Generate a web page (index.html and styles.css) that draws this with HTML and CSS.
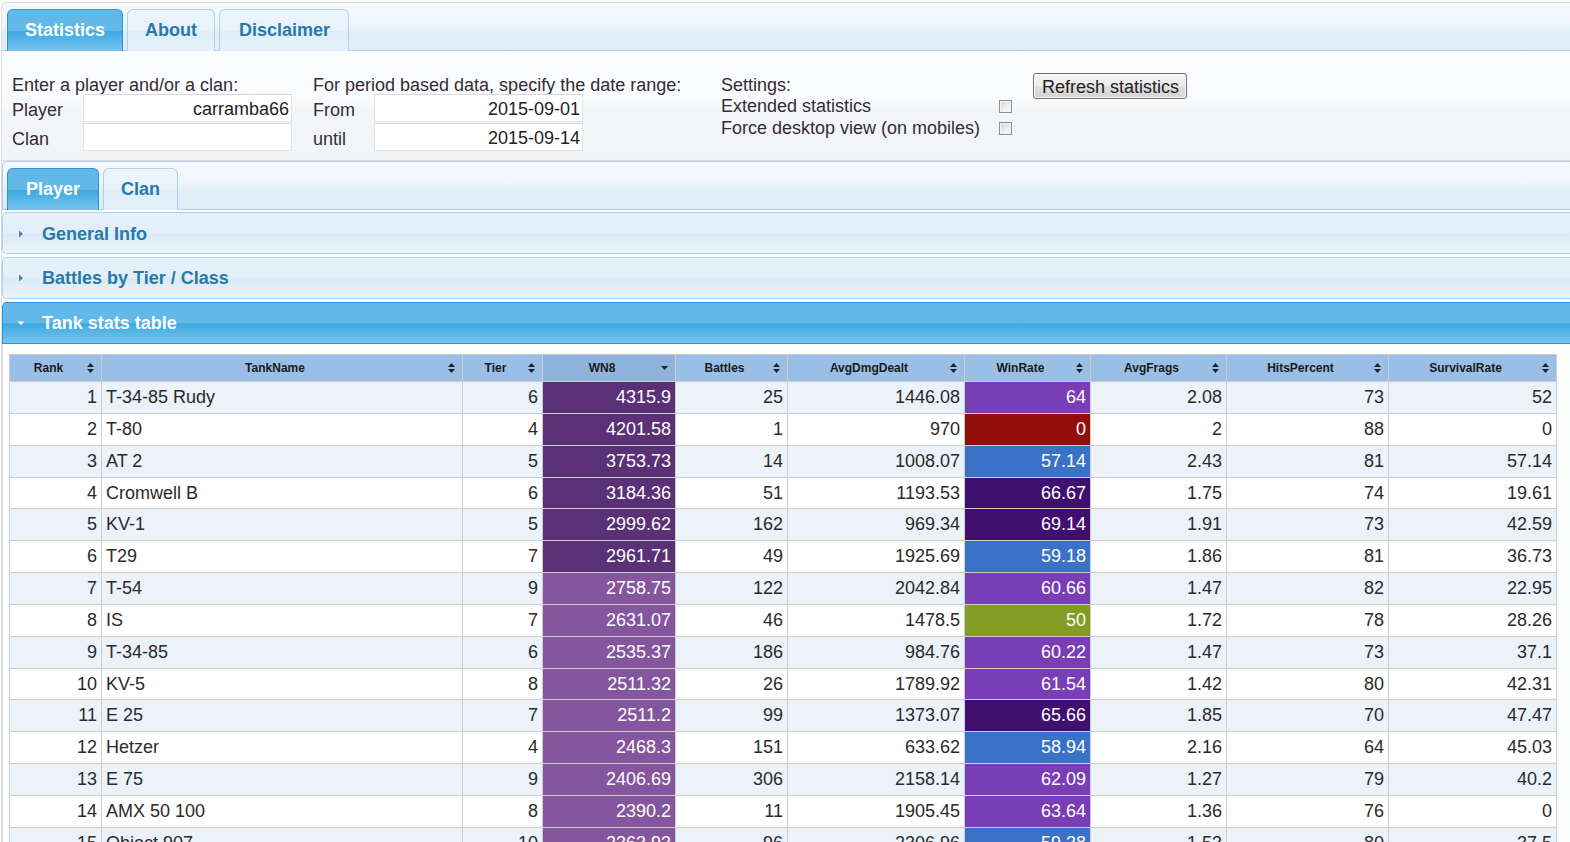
FILE: index.html
```html
<!DOCTYPE html>
<html>
<head>
<meta charset="utf-8">
<title>Tank statistics</title>
<link rel="stylesheet" href="styles.css">
</head>
<body>
<div class="app">
  <ul class="tab-bar main-bar">
    <li class="tab active">Statistics</li>
    <li class="tab">About</li>
    <li class="tab tab-wide">Disclaimer</li>
  </ul>
  <div class="form-panel">
    <div class="form-block block-player">
      <div class="block-title">Enter a player and/or a clan:</div>
      <div class="field-grid">
        <label class="field-label">Player</label><input class="text-input" type="text" value="carramba66">
        <label class="field-label">Clan</label><input class="text-input" type="text" value="">
      </div>
    </div>
    <div class="form-block block-dates">
      <div class="block-title">For period based data, specify the date range:</div>
      <div class="field-grid">
        <label class="field-label">From</label><input class="text-input" type="text" value="2015-09-01">
        <label class="field-label">until</label><input class="text-input" type="text" value="2015-09-14">
      </div>
    </div>
    <div class="form-block block-settings">
      <div class="settings-title">Settings:</div>
      <div class="settings-grid">
        <span>Extended statistics</span><input class="check" type="checkbox">
        <span>Force desktop view (on mobiles)</span><input class="check" type="checkbox">
      </div>
    </div>
    <button class="refresh" type="button">Refresh statistics</button>
  </div>

  <ul class="tab-bar sub-bar">
    <li class="tab active">Player</li>
    <li class="tab">Clan</li>
  </ul>

  <div class="accordion">
    <div class="acc-header">
      <svg class="acc-icon" width="8" height="8" viewBox="0 0 8 8"><path d="M2 0.5L6 4L2 7.5Z" fill="#4583b8"/></svg>
      <span>General Info</span>
    </div>
    <div class="acc-header">
      <svg class="acc-icon" width="8" height="8" viewBox="0 0 8 8"><path d="M2 0.5L6 4L2 7.5Z" fill="#4583b8"/></svg>
      <span>Battles by Tier / Class</span>
    </div>
    <div class="acc-header acc-active">
      <svg class="acc-icon" width="8" height="8" viewBox="0 0 8 8"><path d="M0.5 2.5H7.5L4 6Z" fill="#ffffff"/></svg>
      <span>Tank stats table</span>
    </div>
    <div class="acc-content">
      <table class="stats">
        <colgroup>
          <col class="c-rank"><col class="c-name"><col class="c-tier"><col class="c-wn8"><col class="c-battles">
          <col class="c-dmg"><col class="c-win"><col class="c-frags"><col class="c-hits"><col class="c-surv">
        </colgroup>
        <thead>
          <tr>
            <th>Rank</th><th>TankName</th><th>Tier</th><th class="sorted">WN8</th><th>Battles</th>
            <th>AvgDmgDealt</th><th>WinRate</th><th>AvgFrags</th><th>HitsPercent</th><th>SurvivalRate</th>
          </tr>
        </thead>
        <tbody>
          <tr class="odd"><td>1</td><td class="name">T-34-85 Rudy</td><td>6</td><td class="wn-super">4315.9</td><td>25</td><td>1446.08</td><td class="wr-unicum">64</td><td>2.08</td><td>73</td><td>52</td></tr>
          <tr><td>2</td><td class="name">T-80</td><td>4</td><td class="wn-super">4201.58</td><td>1</td><td>970</td><td class="wr-verybad">0</td><td>2</td><td>88</td><td>0</td></tr>
          <tr class="odd"><td>3</td><td class="name">AT 2</td><td>5</td><td class="wn-super">3753.73</td><td>14</td><td>1008.07</td><td class="wr-great">57.14</td><td>2.43</td><td>81</td><td>57.14</td></tr>
          <tr><td>4</td><td class="name">Cromwell B</td><td>6</td><td class="wn-super">3184.36</td><td>51</td><td>1193.53</td><td class="wr-super">66.67</td><td>1.75</td><td>74</td><td>19.61</td></tr>
          <tr class="odd"><td>5</td><td class="name">KV-1</td><td>5</td><td class="wn-super">2999.62</td><td>162</td><td>969.34</td><td class="wr-super">69.14</td><td>1.91</td><td>73</td><td>42.59</td></tr>
          <tr><td>6</td><td class="name">T29</td><td>7</td><td class="wn-super">2961.71</td><td>49</td><td>1925.69</td><td class="wr-great">59.18</td><td>1.86</td><td>81</td><td>36.73</td></tr>
          <tr class="odd"><td>7</td><td class="name">T-54</td><td>9</td><td class="wn-unicum">2758.75</td><td>122</td><td>2042.84</td><td class="wr-unicum">60.66</td><td>1.47</td><td>82</td><td>22.95</td></tr>
          <tr><td>8</td><td class="name">IS</td><td>7</td><td class="wn-unicum">2631.07</td><td>46</td><td>1478.5</td><td class="wr-good">50</td><td>1.72</td><td>78</td><td>28.26</td></tr>
          <tr class="odd"><td>9</td><td class="name">T-34-85</td><td>6</td><td class="wn-unicum">2535.37</td><td>186</td><td>984.76</td><td class="wr-unicum">60.22</td><td>1.47</td><td>73</td><td>37.1</td></tr>
          <tr><td>10</td><td class="name">KV-5</td><td>8</td><td class="wn-unicum">2511.32</td><td>26</td><td>1789.92</td><td class="wr-unicum">61.54</td><td>1.42</td><td>80</td><td>42.31</td></tr>
          <tr class="odd"><td>11</td><td class="name">E 25</td><td>7</td><td class="wn-unicum">2511.2</td><td>99</td><td>1373.07</td><td class="wr-super">65.66</td><td>1.85</td><td>70</td><td>47.47</td></tr>
          <tr><td>12</td><td class="name">Hetzer</td><td>4</td><td class="wn-unicum">2468.3</td><td>151</td><td>633.62</td><td class="wr-great">58.94</td><td>2.16</td><td>64</td><td>45.03</td></tr>
          <tr class="odd"><td>13</td><td class="name">E 75</td><td>9</td><td class="wn-unicum">2406.69</td><td>306</td><td>2158.14</td><td class="wr-unicum">62.09</td><td>1.27</td><td>79</td><td>40.2</td></tr>
          <tr><td>14</td><td class="name">AMX 50 100</td><td>8</td><td class="wn-unicum">2390.2</td><td>11</td><td>1905.45</td><td class="wr-unicum">63.64</td><td>1.36</td><td>76</td><td>0</td></tr>
          <tr class="odd"><td>15</td><td class="name">Object 907</td><td>10</td><td class="wn-unicum">2363.93</td><td>96</td><td>2306.96</td><td class="wr-great">59.38</td><td>1.53</td><td>80</td><td>37.5</td></tr>
        </tbody>
      </table>
    </div>
  </div>
</div>
</body>
</html>
```
FILE: styles.css
```css
html {
  overflow: hidden;
}
body {
  margin: 0;
  background: #ffffff;
  font-family: "Liberation Sans", Arial, sans-serif;
  font-size: 18px;
  color: #362b36;
}

.app {
  margin: 2px -20px 0 1px;
  border: 1px solid #dddddd;
  border-bottom: 0;
  border-radius: 5px 5px 0 0;
  background: #fcfdfd;
}

/* ---------- tab bars ---------- */
.tab-bar {
  list-style: none;
  margin: 0;
  display: flex;
  gap: 4px;
  background: linear-gradient(to bottom, #f5f9fd 0%, #eff6fc 42%, #e2eff8 62%, #deedf7 100%);
  border-bottom: 1px solid #aed0ea;
}
.main-bar {
  padding: 6px 4px 0 5px;
  border-radius: 4px 4px 0 0;
}
.sub-bar {
  padding: 6px 4px 0 4px;
  border: 1px solid #aed0ea;
  border-radius: 5px 0 0 0;
  border-right: 0;
}
.tab {
  height: 41px;
  line-height: 41px;
  padding: 0 17px;
  margin-bottom: -1px;
  border: 1px solid #aed0ea;
  border-bottom: 0;
  border-radius: 6px 6px 0 0;
  font-weight: bold;
  color: #2779aa;
  background: linear-gradient(to bottom, #edf5fc 0%, #e8f2fb 50%, #dfeef9 52%, #e4f0fa 100%);
}
.tab.active {
  color: #ffffff;
  border-color: #2694e8;
  background: linear-gradient(to bottom, #62b9e8 0%, #62b9e8 50%, #3ca9e3 52%, #78c4eb 100%);
}
.tab.tab-wide {
  padding: 0 18px 0 19px;
}
.sub-bar .tab:first-child {
  padding: 0 18px;
}

/* ---------- form ---------- */
.form-panel {
  display: flex;
  align-items: flex-start;
  gap: 21px;
  padding: 22px 10px 9px 10px;
  border-bottom: 1px solid #dddddd;
  background: linear-gradient(to bottom, #fcfdfe 0%, #fafbfc 40%, #f3f6f8 56%, #f2f5f7 100%);
}
.block-player {
  width: 280px;
}
.block-dates {
  width: 387px;
}
.block-settings {
  width: 291px;
}
.block-title {
  height: 21px;
  line-height: 25px;
  white-space: nowrap;
}
.field-grid {
  display: grid;
  grid-template-columns: 71px 209px;
  grid-auto-rows: 28px;
  row-gap: 1px;
}
.block-dates .field-grid {
  grid-template-columns: 61px 209px;
}
.field-label {
  height: 28px;
  line-height: 32px;
}
.text-input {
  box-sizing: border-box;
  width: 209px;
  height: 28px;
  margin: 0;
  padding: 2px 2px 0 3px;
  border: 1px solid #e4e4e4;
  border-top-color: #d9d9d9;
  background: #ffffff;
  font-family: "Liberation Sans", Arial, sans-serif;
  font-size: 18px;
  color: #222222;
  text-align: right;
  outline: none;
}
.settings-title {
  line-height: 24px;
  height: 22px;
}
.settings-grid {
  display: grid;
  grid-template-columns: 278px 13px;
  grid-auto-rows: 22px;
  align-items: center;
  line-height: 22px;
  white-space: nowrap;
}
.check {
  -webkit-appearance: none;
  appearance: none;
  box-sizing: border-box;
  width: 13px;
  height: 13px;
  margin: 0;
  border: 1px solid #8f8f8f;
  background: linear-gradient(135deg, #d8d8d8 0%, #eeeeee 60%, #fafafa 100%);
  box-shadow: inset 0 0 0 1px #f3f3f3;
}
.refresh {
  height: 26px;
  margin: 0;
  padding: 0 7px 0 8px;
  border: 1px solid #707070;
  border-radius: 3px;
  background: linear-gradient(to bottom, #f3f3f3 0%, #ececec 48%, #dedede 52%, #d4d4d4 100%);
  box-shadow: inset 0 0 0 1px #fbfbfb;
  font-family: "Liberation Sans", Arial, sans-serif;
  font-size: 18px;
  color: #222222;
  line-height: 26px;
}

/* ---------- accordion ---------- */
.accordion {
  padding-top: 2px;
}
.acc-header {
  box-sizing: border-box;
  height: 42px;
  margin-top: 3px;
  display: flex;
  align-items: center;
  padding-left: 14px;
  border: 1px solid #aed0ea;
  border-right: 0;
  border-radius: 5px 0 0 5px;
  font-weight: bold;
  color: #2779aa;
  background: linear-gradient(to bottom, #e5f1fb 0%, #e2effa 50%, #d9eaf8 52%, #ebf4fc 100%);
}
.acc-header:first-child {
  margin-top: 0;
  padding-top: 2px;
}
.acc-icon {
  flex: none;
  margin-right: 17px;
}
.acc-active {
  color: #ffffff;
  border-color: #2694e8;
  border-radius: 5px 0 0 0;
  background: linear-gradient(to bottom, #62b9e8 0%, #62b9e8 50%, #3ca9e3 52%, #78c4eb 100%);
}
.acc-content {
  padding: 10px 6px 20px 6px;
  border-left: 1px solid #dddddd;
  background: #fcfdfd;
}

/* ---------- table ---------- */
.stats {
  width: 1547px;
  table-layout: fixed;
  border-collapse: collapse;
  font-family: "Liberation Sans", Arial, sans-serif;
}
.c-rank { width: 92px; }
.c-name { width: 361px; }
.c-tier { width: 80px; }
.c-wn8 { width: 133px; }
.c-battles { width: 112px; }
.c-dmg { width: 177px; }
.c-win { width: 126px; }
.c-frags { width: 136px; }
.c-hits { width: 162px; }
.c-surv { width: 168px; }

.stats th {
  padding: 4px 18px 4px 4px;
  border: 1px solid #cdcdcd;
  background-color: #99bfe6;
  background-image: url("data:image/svg+xml,%3Csvg xmlns='http://www.w3.org/2000/svg' width='7' height='10' viewBox='0 0 7 10'%3E%3Cpath d='M3.5 0L7 4H0Z M0 6H7L3.5 10Z' fill='%23222222'/%3E%3C/svg%3E");
  background-repeat: no-repeat;
  background-position: right 7px center;
  font-size: 12px;
  font-weight: bold;
  line-height: 18px;
  color: #1a1a1a;
  text-align: center;
  white-space: nowrap;
  overflow: hidden;
}
.stats th.sorted {
  background-color: #8eb4dd;
  background-image: url("data:image/svg+xml,%3Csvg xmlns='http://www.w3.org/2000/svg' width='7' height='4' viewBox='0 0 7 4'%3E%3Cpath d='M0 0H7L3.5 4Z' fill='%23222222'/%3E%3C/svg%3E");
}
.stats td {
  padding: 4px;
  border: 1px solid #cdcdcd;
  background: #ffffff;
  font-size: 18px;
  line-height: 22.85px;
  color: #2a2a2a;
  text-align: right;
  white-space: nowrap;
  overflow: hidden;
}
.stats tr.odd td {
  background: #ebf2fa;
}
.stats td.name {
  text-align: left;
}

.stats tr td.wn-super { background: #5a3076; color: #ffffff; }
.stats tr td.wn-unicum { background: #83569d; color: #ffffff; }
.stats tr td.wr-super { background: #401070; color: #ffffff; }
.stats tr td.wr-unicum { background: #793db6; color: #ffffff; }
.stats tr td.wr-great { background: #3972c6; color: #ffffff; }
.stats tr td.wr-good { background: #849b24; color: #ffffff; }
.stats tr td.wr-verybad { background: #930d0d; color: #ffffff; }
```
